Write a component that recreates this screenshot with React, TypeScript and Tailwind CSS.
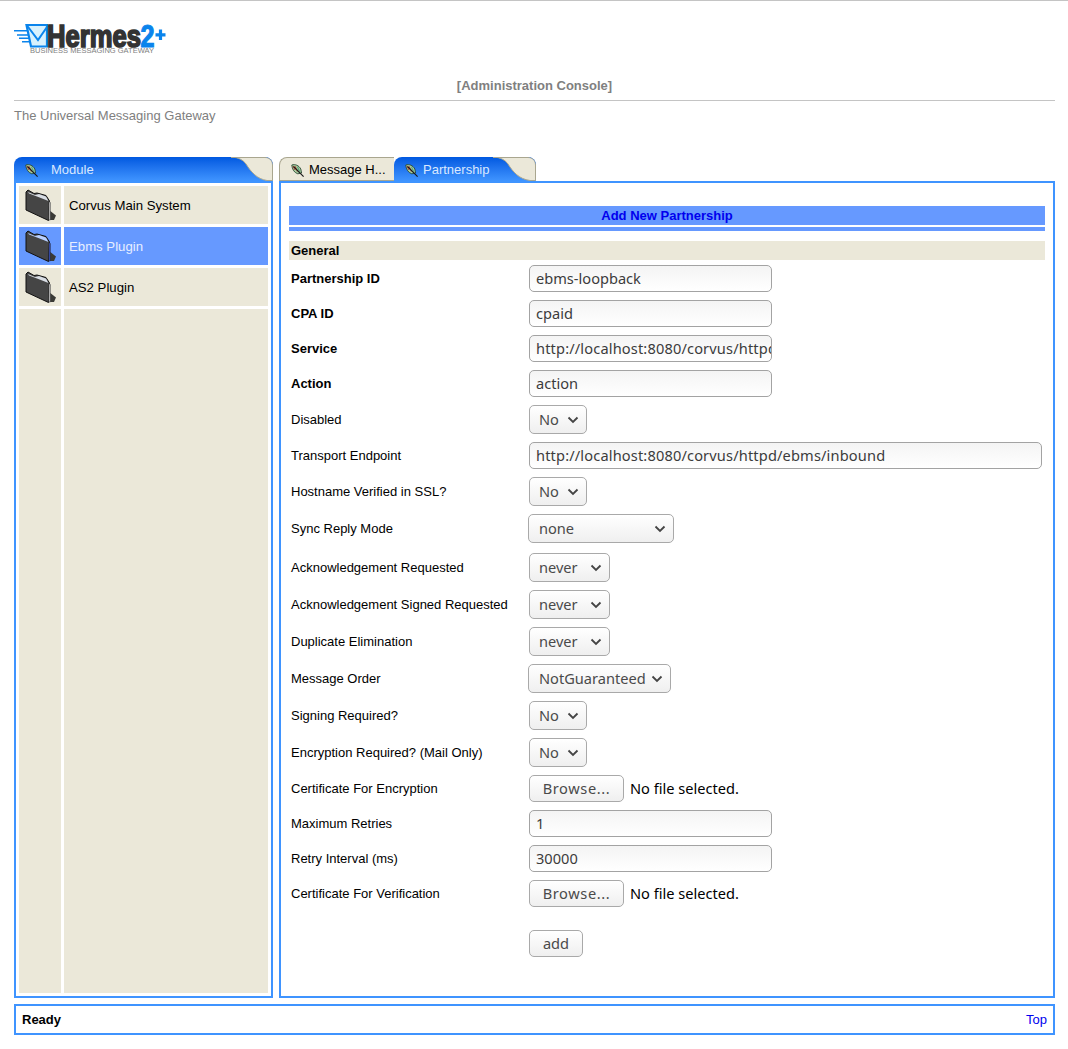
import React from 'react'

const labelFont = "font-['Liberation_Sans',Arial,sans-serif]"
const fieldFont = "font-['Noto_Sans','Open_Sans',sans-serif]"
const serviceUrl = 'http://localhost:8080/corvus/httpd/ebms/inbound'

const Feather = () => (
  <svg width="13" height="13" viewBox="0 0 13 13" className="shrink-0">
    <path d="M0.8 1 C4 -0.2 8 1.5 9.8 5 L10.6 9 L6.8 9.8 C3.5 8.8 1 5.5 0.8 1 Z" fill="#a4cfa0" stroke="#1f3a2a" strokeWidth="0.8" />
    <path d="M2 2 L4 6 M4 2.2 L6.5 7.5" stroke="#c0523c" strokeWidth="1.1" />
    <path d="M6.5 2.8 L8.6 7.5" stroke="#4f9c7a" strokeWidth="1" />
    <path d="M2.5 2.5 L12.6 12.6" fill="none" stroke="#1a1a1a" strokeWidth="1.1" />
  </svg>
)

const Folder = ({ active }: { active?: boolean }) => (
  <svg width="32" height="32" viewBox="0 0 32 32">
    <path d="M25 21 L32 26.5 L30 31 L25 31 Z" fill="#3a3a36" />
    <path d="M2 3 L2 21 L24.5 31.5 L25.5 12 L22 6.5 L13 4 L10 4.5 L4 1 Z" fill="#454545" stroke="#111" strokeWidth="1" />
    <path d="M4 3 L11 6 L15 5 L22 7.5 L24.5 12 L13 7.5 L5 4.5 Z" fill={active ? '#b9d0ff' : '#d8dde4'} />
    <path d="M25 12.5 L24.8 31 L26.3 31 L26.4 13.5 Z" fill={active ? '#3d55c8' : '#d8d8d8'} stroke="#222" strokeWidth="0.5" />
  </svg>
)

// beige scoop at the right end of a tab
const Corner = ({ w }: { w: number }) => (
  <svg width={w} height="24" viewBox={`0 0 ${w} 24`} className="shrink-0 block">
    <path d={`M0 0 C8 0.5 12 3 15 7 C20 15 26 22 ${w - 6} 23.5 L${w - 0.5} 23.5 L${w - 0.5} 8 C${w - 0.5} 3 ${w - 4} 0.5 ${w - 8} 0.5 L0 0.5 Z`} fill="#ebe8d9" stroke="#a9a68f" strokeWidth="1" />
  </svg>
)

const ModuleRow = ({ label, active }: { label: string; active?: boolean }) => (
  <div className="flex gap-[3px] h-[38px]">
    <div className={`w-[42px] flex items-center justify-center ${active ? 'bg-[#6699ff]' : 'bg-[#ebe8d9]'}`}>
      <Folder active={active} />
    </div>
    <div className={`flex-1 flex items-center pl-[5px] pt-[2px] text-[13.2px] ${active ? 'bg-[#6699ff] text-[#e8efff]' : 'bg-[#ebe8d9] text-black'}`}>
      {label}
    </div>
  </div>
)

const TextInput = ({ value, wide, url }: { value: string; wide?: boolean; url?: boolean }) => (
  <div
    className={`h-[27px] ${wide ? 'w-[513px]' : 'w-[243px]'} ${url ? 'tracking-[0.15px]' : ''} rounded-[5px] border border-[#a3a3a3] bg-gradient-to-b from-[#f4f4f4] to-white pl-[6px] flex items-center overflow-hidden whitespace-pre text-[14.6px] text-[#3c3c3c] ${fieldFont}`}
  >
    {value}
  </div>
)

const Select = ({ value, w, ml }: { value: string; w: string; ml?: boolean }) => (
  <div
    className={`h-[29px] ${w} ${ml ? '-ml-px pl-[10px]' : 'pl-[9px]'} pr-[7px] rounded-[5px] border border-[#a9a9a9] bg-gradient-to-b from-white to-[#efefef] flex items-center justify-between text-[14.6px] text-[#4a4a4a] ${fieldFont}`}
  >
    <span>{value}</span>
    <svg width="12" height="8" viewBox="0 0 12 8">
      <path d="M1.5 1.5 L6 6 L10.5 1.5" fill="none" stroke="#444" strokeWidth="1.8" />
    </svg>
  </div>
)

const FileInput = () => (
  <div className={`flex items-center gap-[6px] text-[14.6px] ${fieldFont}`}>
    <div className="w-[95px] h-[27px] rounded-[5px] border border-[#a9a9a9] bg-gradient-to-b from-white to-[#efefef] flex items-center justify-center tracking-[0.6px] text-[#4a4a4a]">
      Browse...
    </div>
    <span className="text-black">No file selected.</span>
  </div>
)

const Row = ({ label, bold, h, children }: { label: string; bold?: boolean; h: string; children: React.ReactNode }) => (
  <div className={`flex items-center ${h}`}>
    <div className={`w-[240px] pl-[2px] text-[13px] text-black ${bold ? 'font-bold' : ''}`}>{label}</div>
    {children}
  </div>
)

export default function App() {
  return (
    <div className={`w-[1068px] h-[1049px] bg-white border-t border-[#c4c4c4] px-[14px] overflow-hidden ${labelFont}`}>
      <div className="w-[1041px]">
        <div className="h-[32px] mt-[21px]">
          <svg width="152" height="32" viewBox="0 0 152 32" className="block">
            <path d="M0 8.7 H13 M3 13 H14 M5 16.3 H15 M8 19.7 H16" stroke="#0a84ec" strokeWidth="1.5" />
            <path d="M12.5 3 H33 L33 24.5 H17 Z" fill="#d8f1fd" stroke="#0a84ec" strokeWidth="2.2" />
            <path d="M13 3.5 L24 18 L34 3.5" fill="none" stroke="#0a84ec" strokeWidth="2" />
            <text x="33" y="25" fontFamily="Liberation Sans, sans-serif" fontWeight="700" fontSize="31" textLength="94" lengthAdjust="spacingAndGlyphs" fill="#333" stroke="#333" strokeWidth="1.7">Hermes</text>
            <text x="126.5" y="25" fontFamily="Liberation Sans, sans-serif" fontWeight="700" fontSize="31" textLength="14" lengthAdjust="spacingAndGlyphs" fill="#0a84ec" stroke="#0a84ec" strokeWidth="1.2">2</text>
            <path d="M146.5 7.5 V18 M141.5 12.8 H151.5" stroke="#0a84ec" strokeWidth="3.2" />
            <text x="16" y="31" fontFamily="Liberation Sans, sans-serif" fontSize="6.6" textLength="124" lengthAdjust="spacingAndGlyphs" fill="#808080">BUSINESS MESSAGING GATEWAY</text>
          </svg>
        </div>
        <div className="mt-[24px] h-[15px] leading-[15px] text-center text-[13px] font-bold text-[#808080]">[Administration Console]</div>
        <div className="mt-[7px] h-px bg-[#c4c4c4]" />
        <div className="mt-[7px] h-[15px] leading-[15px] text-[13px] text-[#808080]">The Universal Messaging Gateway</div>

        <div className="mt-[34px] flex gap-[6px] h-[841px]">
          <div className="w-[259px] flex flex-col">
            <div className="flex h-[24px] rounded-t-[8px] overflow-hidden bg-gradient-to-b from-[#0058e0] to-[#3f94ff] text-[#d9e8ff]">
              <div className="flex-1 flex items-center pl-[11px] pt-[2px]">
                <Feather />
                <span className="text-[13px] ml-[13px]">Module</span>
              </div>
              <Corner w={42} />
            </div>
            <div className="flex-1 border-2 border-[#3f94ff] p-[3px] flex flex-col gap-[3px]">
              <ModuleRow label="Corvus Main System" />
              <ModuleRow label="Ebms Plugin" active />
              <ModuleRow label="AS2 Plugin" />
              <div className="flex-1 flex gap-[3px]">
                <div className="w-[42px] bg-[#ebe8d9]" />
                <div className="flex-1 bg-[#ebe8d9]" />
              </div>
            </div>
          </div>

          <div className="w-[776px] flex flex-col">
            <div className="flex h-[24px]">
              <div className="w-[115px] rounded-tl-[8px] border-t border-l border-b border-[#a9a68f] bg-[#ebe8d9] text-black flex items-center pl-[11px] pt-[2px]">
                <Feather />
                <span className="text-[13px] ml-[5px] whitespace-nowrap">Message H...</span>
              </div>
              <div className="w-[142px] flex rounded-t-[8px] overflow-hidden bg-gradient-to-b from-[#0058e0] to-[#3f94ff] text-[#d9e8ff]">
                <div className="flex-1 flex items-center pl-[11px] pt-[2px]">
                  <Feather />
                  <span className="text-[13px] ml-[5px] whitespace-nowrap">Partnership</span>
                </div>
                <Corner w={43} />
              </div>
            </div>
            <div className="flex-1 border-2 border-[#3f94ff] px-[8px] pt-[23px]">
              <div className="h-[19px] bg-[#6699ff] text-center text-[13px] leading-[19px] font-bold text-[#0000ee]">Add New Partnership</div>
              <div className="mt-[2px] h-[4px] bg-[#6699ff]" />
              <div className="mt-[10px] h-[19px] bg-[#ebe8d9] pl-[2px] text-[13px] leading-[19px] font-bold text-black">General</div>

              <Row label="Partnership ID" bold h="h-[35px] mt-[1px]"><TextInput value="ebms-loopback" /></Row>
              <Row label="CPA ID" bold h="h-[35px]"><TextInput value="cpaid" /></Row>
              <Row label="Service" bold h="h-[35px]"><TextInput value={serviceUrl} url /></Row>
              <Row label="Action" bold h="h-[35px]"><TextInput value="action" /></Row>
              <Row label="Disabled" h="h-[37px]"><Select value="No" w="w-[58px]" /></Row>
              <Row label="Transport Endpoint" h="h-[35px]"><TextInput value={serviceUrl} wide url /></Row>
              <Row label="Hostname Verified in SSL?" h="h-[37px]"><Select value="No" w="w-[58px]" /></Row>
              <Row label="Sync Reply Mode" h="h-[37px]"><Select value="none" w="w-[146px]" ml /></Row>
              <Row label="Acknowledgement Requested" h="h-[37px] mt-[2px]"><Select value="never" w="w-[81px]" /></Row>
              <Row label="Acknowledgement Signed Requested" h="h-[37px]"><Select value="never" w="w-[81px]" /></Row>
              <Row label="Duplicate Elimination" h="h-[37px]"><Select value="never" w="w-[81px]" /></Row>
              <Row label="Message Order" h="h-[37px]"><Select value="NotGuaranteed" w="w-[143px]" ml /></Row>
              <Row label="Signing Required?" h="h-[37px]"><Select value="No" w="w-[58px]" /></Row>
              <Row label="Encryption Required? (Mail Only)" h="h-[37px]"><Select value="No" w="w-[58px]" /></Row>
              <Row label="Certificate For Encryption" h="h-[35px]"><FileInput /></Row>
              <Row label="Maximum Retries" h="h-[35px]"><TextInput value="1" /></Row>
              <Row label="Retry Interval (ms)" h="h-[35px]"><TextInput value="30000" /></Row>
              <Row label="Certificate For Verification" h="h-[35px]"><FileInput /></Row>
              <div className="mt-[19px] ml-[240px]">
                <div className={`w-[54px] h-[27px] rounded-[5px] border border-[#a9a9a9] bg-gradient-to-b from-white to-[#efefef] flex items-center justify-center text-[14.6px] text-[#4a4a4a] ${fieldFont}`}>add</div>
              </div>
            </div>
          </div>
        </div>

        <div className="mt-[6px] h-[31px] border-2 border-[#3f94ff] flex items-center justify-between pl-[6px] pr-[6px] text-[13px]">
          <span className="font-bold text-black">Ready</span>
          <span className="text-[#0000ee]">Top</span>
        </div>
      </div>
    </div>
  )
}
